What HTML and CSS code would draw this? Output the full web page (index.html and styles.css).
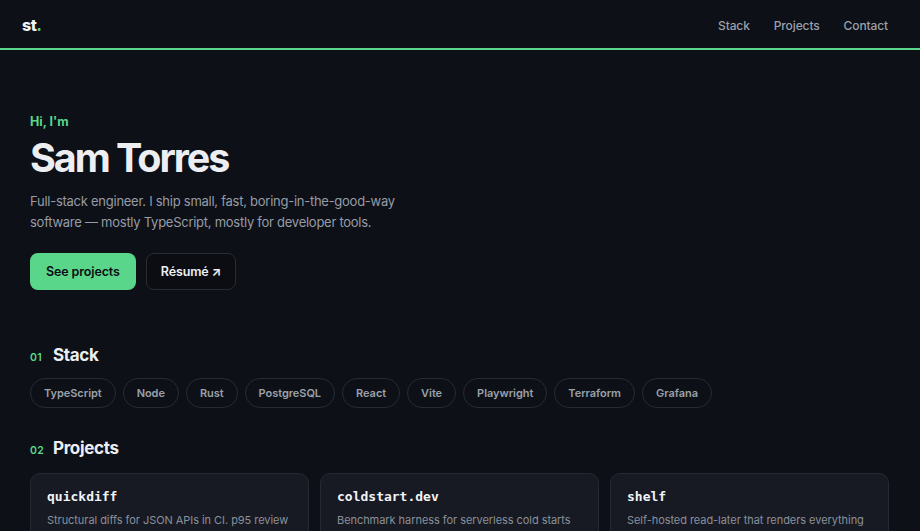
FILE: index.html
```html
<!DOCTYPE html>
<html lang="en">
<head>
<meta charset="utf-8">
<title>Sam Torres</title>
<link rel="stylesheet" href="styles.css">
</head>
<body>
<header class="topbar">
  <div class="logo">st<span class="dot">.</span></div>
  <nav class="nav">
    <a href="#stack">Stack</a>
    <a href="#projects">Projects</a>
    <a href="#contact">Contact</a>
  </nav>
</header>
<main class="main">
  <section class="hero">
    <p class="eyebrow">Hi, I'm</p>
    <h1 class="name">Sam Torres</h1>
    <p class="lede">Full-stack engineer. I ship small, fast, boring-in-the-good-way software — mostly TypeScript, mostly for developer tools.</p>
    <div class="actions">
      <a class="btn btn-primary" href="#projects">See projects</a>
      <a class="btn btn-ghost" href="#resume">Résumé <span class="arrow">↗</span></a>
    </div>
  </section>
  <section class="section" id="stack">
    <h2 class="section-title"><span class="num">01</span>Stack</h2>
    <ul class="chips">
      <li>TypeScript</li><li>Node</li><li>Rust</li><li>PostgreSQL</li><li>React</li><li>Vite</li><li>Playwright</li><li>Terraform</li><li>Grafana</li>
    </ul>
  </section>
  <section class="section" id="projects">
    <h2 class="section-title"><span class="num">02</span>Projects</h2>
    <div class="cards">
      <article class="card">
        <h3 class="card-title">quickdiff</h3>
        <p class="card-desc">Structural diffs for JSON APIs in CI. p95 review time down 40%.</p>
      </article>
      <article class="card">
        <h3 class="card-title">coldstart.dev</h3>
        <p class="card-desc">Benchmark harness for serverless cold starts across providers.</p>
      </article>
      <article class="card">
        <h3 class="card-title">shelf</h3>
        <p class="card-desc">Self-hosted read-later that renders everything as clean markdown.</p>
      </article>
    </div>
  </section>
</main>
</body>
</html>
```
FILE: styles.css
```css
* { box-sizing: border-box; }
html, body { margin: 0; padding: 0; }
body {
  background: #0d1017;
  color: #e8eaee;
  font-family: Inter, "Noto Sans", sans-serif;
}
a { color: inherit; text-decoration: none; }

.topbar {
  height: 50px;
  display: flex;
  align-items: center;
  justify-content: space-between;
  padding: 2px 32px 0 22px;
  border-bottom: 2px solid #5ad68a;
}
.logo {
  font-size: 16px;
  font-weight: 800;
  letter-spacing: -0.03em;
  color: #f1f3f6;
}
.logo .dot { color: #5ad68a; }
.nav { display: flex; gap: 24px; }
.nav a {
  font-size: 12px;
  font-weight: 500;
  letter-spacing: -0.01em;
  color: #9aa0aa;
}

.main { padding: 0 30px; }

.hero { padding-top: 64px; }
.eyebrow {
  margin: 0;
  font-size: 12.5px;
  line-height: 16px;
  font-weight: 700;
  color: #5ad68a;
}
.name {
  margin: 4px 0 0;
  font-size: 39.5px;
  line-height: 48px;
  font-weight: 700;
  letter-spacing: -0.052em;
  color: #eceef2;
}
.lede {
  margin: 9px 0 0;
  max-width: 380px;
  font-size: 13px;
  line-height: 21px;
  letter-spacing: -0.02em;
  color: #979ca6;
}
.actions { display: flex; gap: 10px; margin-top: 20px; }
.btn {
  display: inline-flex;
  align-items: center;
  height: 37px;
  padding: 0 16px;
  border-radius: 8px;
  font-size: 12.5px;
  font-weight: 600;
  letter-spacing: -0.01em;
}
.btn-primary { background: #5ad68a; color: #0b0e14; }
.btn-ghost {
  background: #0b0d12;
  border: 1px solid #272b34;
  color: #eef0f3;
  padding: 0 14px;
}
.btn-ghost .arrow { margin-left: 3px; font-size: 12.5px; font-weight: 700; }

.section { margin-top: 53px; }
.section + .section { margin-top: 28px; }
.section-title {
  margin: 0;
  display: flex;
  align-items: baseline;
  font-size: 17px;
  line-height: 24px;
  font-weight: 700;
  letter-spacing: -0.02em;
  color: #eceef2;
}
.num {
  width: 23px;
  flex: none;
  font-size: 10.5px;
  font-weight: 600;
  color: #5ad68a;
  letter-spacing: 0.02em;
}
.chips {
  list-style: none;
  margin: 8px 0 0;
  padding: 0;
  display: flex;
  flex-wrap: wrap;
  gap: 7px;
}
.chips li {
  height: 30px;
  display: flex;
  align-items: center;
  padding: 0 13px;
  border: 1px solid #272b34;
  border-radius: 999px;
  font-size: 11px;
  font-weight: 600;
  letter-spacing: -0.004em;
  color: #9aa0aa;
}

.cards {
  margin-top: 10px;
  display: grid;
  grid-template-columns: repeat(3, 1fr);
  gap: 11px;
  width: 859px;
}
.card {
  background: #171a22;
  border: 1px solid #252933;
  border-radius: 10px;
  padding: 14px 16px 16px;
}
.card-title {
  margin: 0;
  font-family: "DejaVu Sans Mono", "Liberation Mono", monospace;
  font-size: 13px;
  line-height: 18px;
  font-weight: 700;
  color: #f1f3f6;
}
.card-desc {
  margin: 5px 0 0;
  font-size: 11px;
  line-height: 18px;
  letter-spacing: -0.005em;
  color: #8a909a;
}
```
